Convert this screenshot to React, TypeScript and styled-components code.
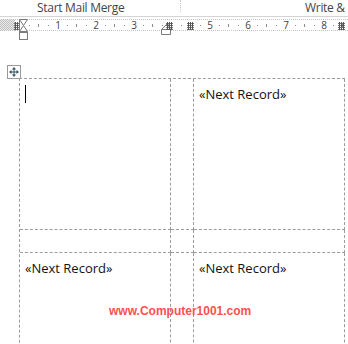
import React from "react"
import styled, { createGlobalStyle } from "styled-components"

const GlobalStyle = createGlobalStyle`
  html, body {
    margin: 0;
    padding: 0;
    background: #ffffff;
    overflow: hidden;
  }
  body {
    font-family: "Open Sans", "Noto Sans", sans-serif;
  }
`

// ruler geometry (page x of the 0" mark and px per inch)
const ORIGIN = 19
const INCH = 38
const SCALE_LEFT = 15

function ColumnMark({ x }: { x: number }) {
  return (
    <MarkSlot style={{ left: x - SCALE_LEFT }}>
      <svg width="7" height="8" viewBox="0 0 7 8">
        <g stroke="#555" strokeWidth="1">
          <path d="M1.5 0 V8 M3.5 0 V8 M5.5 0 V8" />
          <path d="M0 1.5 H7 M0 3.5 H7 M0 5.5 H7 M0 7.5 H7" opacity="0.8" />
        </g>
      </svg>
    </MarkSlot>
  )
}

export default function App() {
  const ticks: { x: number; long: boolean }[] = []
  for (let k = 1; k < 36; k++) {
    if (k % 4 === 0) continue
    ticks.push({ x: ORIGIN + k * (INCH / 4), long: k % 2 === 0 })
  }
  const numbers = [1, 2, 3, 5, 6, 7, 8]

  return (
    <>
      <GlobalStyle />
      <Page>
        <RibbonLabels>
          <GroupLabel>Start Mail Merge</GroupLabel>
          <GroupLabel $second>Write &amp;</GroupLabel>
        </RibbonLabels>

        <Ruler>
          <Hatch />
          <Scale>
            {ticks.map((t) => (
              <Tick key={t.x} $long={t.long} style={{ left: t.x - SCALE_LEFT }} />
            ))}
            {numbers.map((n) => (
              <RulerNumber key={n} style={{ left: ORIGIN + n * INCH - SCALE_LEFT }}>
                {n}
              </RulerNumber>
            ))}
            <ColumnMark x={14} />
            <RightIndent style={{ left: 161 - SCALE_LEFT }}>
              <svg width="10" height="12" viewBox="0 0 10 12">
                <path d="M0.5 11.5 V6.5 L6.5 0.5 L9.5 6.5 V11.5 Z" fill="#fff" stroke="#7a7a7a" />
                <path d="M0.5 6.5 H9.5" stroke="#7a7a7a" />
              </svg>
            </RightIndent>
            <ColumnMark x={166} />
            <ColumnMark x={187} />
            <ColumnMark x={338} />
            <LeftIndent style={{ left: 19 - SCALE_LEFT }}>
              <svg width="9" height="21" viewBox="0 0 9 21">
                <path d="M0.5 0.5 H8.5 L4.5 6.5 L8.5 12.5 H0.5 V0.5 Z" fill="#fff" stroke="#7a7a7a" />
                <path d="M0.5 0.5 L4.5 6.5 L0.5 12.5" fill="none" stroke="#7a7a7a" />
                <rect x="0.5" y="13.5" width="8" height="7" fill="#fff" stroke="#7a7a7a" />
              </svg>
            </LeftIndent>
          </Scale>
        </Ruler>

        <Doc>
          <MoveHandle>
            <svg width="10" height="10" viewBox="0 0 10 10">
              <g fill="#34505e">
                <rect x="4.5" y="1" width="1" height="8" />
                <rect x="1" y="4.5" width="8" height="1" />
                <path d="M5 0 L7 2.5 H3 Z" />
                <path d="M5 10 L7 7.5 H3 Z" />
                <path d="M0 5 L2.5 3 V7 Z" />
                <path d="M10 5 L7.5 3 V7 Z" />
              </g>
            </svg>
          </MoveHandle>
          <LabelGrid>
            <Cell $row="big">
              <Caret />
            </Cell>
            <Cell $row="big" />
            <Cell $row="big">«Next Record»</Cell>
            <Cell $row="gap" />
            <Cell $row="gap" />
            <Cell $row="gap" />
            <Cell $row="last">«Next Record»</Cell>
            <Cell $row="last" />
            <Cell $row="last">«Next Record»</Cell>
          </LabelGrid>
          <Watermark>www.Computer1001.com</Watermark>
        </Doc>
      </Page>
    </>
  )
}

const Page = styled.div`
  width: 348px;
  height: 344px;
  overflow: hidden;
  background: #fff;
`

const RibbonLabels = styled.div`
  display: flex;
  height: 16px;
  border-bottom: 1px solid #d4d4d4;
  background: #fff;
`

const GroupLabel = styled.div<{ $second?: boolean }>`
  box-sizing: border-box;
  height: ${(p) => (p.$second ? "16px" : "12px")};
  width: ${(p) => (p.$second ? "auto" : "181px")};
  flex: ${(p) => (p.$second ? "1" : "none")};
  padding-left: ${(p) => (p.$second ? "124px" : "37px")};
  border-right: ${(p) => (p.$second ? "none" : "1px dotted #c8c8c8")};
  font-size: 12px;
  line-height: 16px;
  letter-spacing: -0.3px;
  color: #444;
  white-space: nowrap;
`

const Ruler = styled.div`
  display: flex;
  height: 12px;
  margin-top: 2px;
`

const Hatch = styled.div`
  width: 15px;
  background: repeating-conic-gradient(#bdbdbd 0 25%, #ececec 0 50%) 0 0 / 2px 2px;
`

const Scale = styled.div`
  position: relative;
  flex: 1;
  box-sizing: border-box;
  border-top: 1px dotted #c4c4c4;
  border-bottom: 1px dotted #c4c4c4;
  background: #fff;
`

const Tick = styled.span<{ $long: boolean }>`
  position: absolute;
  top: ${(p) => (p.$long ? "4px" : "5px")};
  width: 1px;
  height: ${(p) => (p.$long ? "3px" : "1px")};
  background: #8a8a8a;
`

const RulerNumber = styled.span`
  position: absolute;
  top: -1px;
  width: 10px;
  margin-left: -4px;
  text-align: center;
  font-size: 10px;
  line-height: 12px;
  color: #444;
`

const MarkSlot = styled.span`
  position: absolute;
  top: 2px;
  line-height: 0;
`

const RightIndent = styled.span`
  position: absolute;
  top: 3px;
  line-height: 0;
`

const LeftIndent = styled.span`
  position: absolute;
  top: -1px;
  line-height: 0;
`

const Doc = styled.div`
  position: relative;
  margin-top: 47px;
  padding-left: 19px;
`

const MoveHandle = styled.div`
  position: absolute;
  left: 7px;
  top: -13px;
  width: 10px;
  height: 10px;
  padding: 1px;
  border: 1px solid #9a9a9a;
  background: #fff;
  line-height: 0;
`

const rowHeights = { big: "151px", gap: "23px", last: "120px" }

const LabelGrid = styled.div`
  display: grid;
  grid-template-columns: 151px 23px 151px;
  width: max-content;
  border-top: 1px dashed #9c9c9c;
  border-left: 1px dashed #9c9c9c;
`

const Cell = styled.div<{ $row: "big" | "gap" | "last" }>`
  box-sizing: border-box;
  height: ${(p) => rowHeights[p.$row]};
  padding: 6px 5px 0;
  border-right: 1px dashed #9c9c9c;
  border-bottom: 1px dashed #9c9c9c;
  font-family: "Open Sans", "Noto Sans", sans-serif;
  font-size: 13px;
  line-height: 18px;
  color: #111;
  white-space: nowrap;
`

const Caret = styled.span`
  display: block;
  width: 1px;
  height: 18px;
  background: #000;
`

const Watermark = styled.div`
  position: absolute;
  left: 109px;
  top: 226px;
  font-family: "Liberation Sans", Arial, sans-serif;
  font-weight: bold;
  font-size: 12px;
  line-height: 14px;
  color: #ff4f4f;
  white-space: nowrap;
`
